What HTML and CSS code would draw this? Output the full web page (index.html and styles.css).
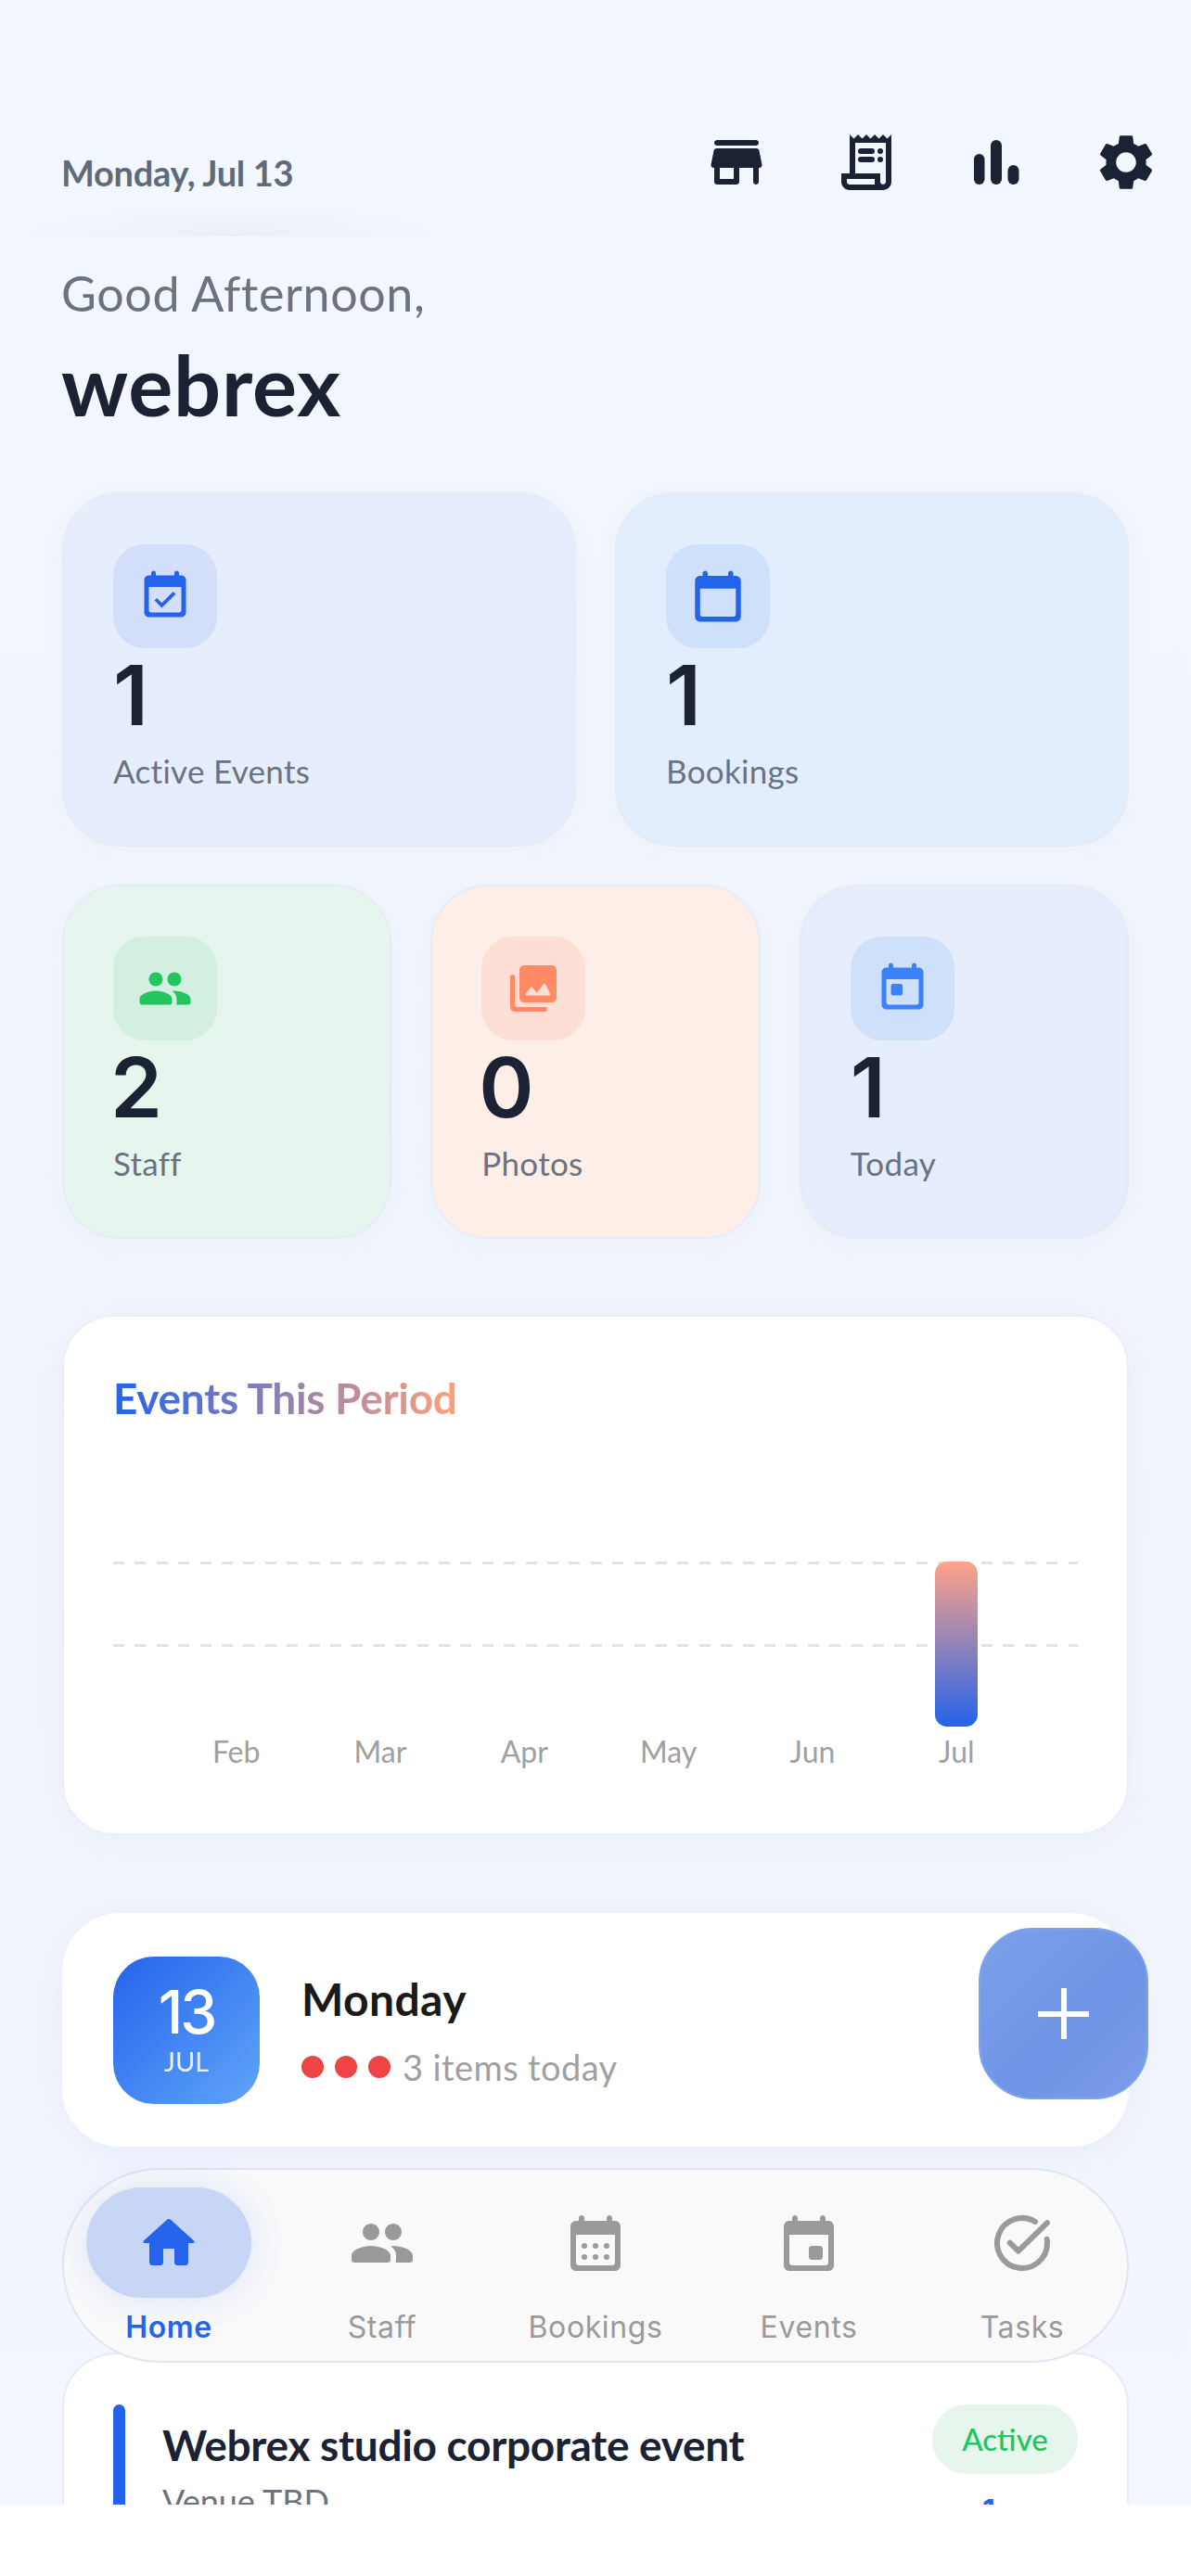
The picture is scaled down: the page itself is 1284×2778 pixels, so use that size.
FILE: index.html
```html
<!DOCTYPE html>
<html lang="en">
<head>
  <meta charset="UTF-8" />
  <meta name="viewport" content="width=device-width, initial-scale=1.0" />
  <title>Dashboard</title>
  <link rel="stylesheet" href="styles.css">
</head>

<body>
  <div class="screen">
    <div class="top-smear"></div>

    <header class="topbar">
      <div class="today-date">Monday, Jul 13</div>
      <div class="top-icons">
        <svg class="top-icon" viewBox="0 0 24 24"><path d="M5 6h14c.55 0 1-.45 1-1s-.45-1-1-1H5c-.55 0-1 .45-1 1s.45 1 1 1zm15.16 1.8c-.09-.46-.5-.8-.98-.8H4.82c-.48 0-.89.34-.98.8l-1 5c-.12.62.35 1.2.98 1.2H4v5c0 .55.45 1 1 1h7c.55 0 1-.45 1-1v-5h5v5c0 .55.45 1 1 1s1-.45 1-1v-5h.18c.63 0 1.1-.58.98-1.2l-1-5zM11 18H6v-4h5v4z"/></svg>
        <svg class="top-icon" viewBox="0 0 24 24"><path d="M19.5 3.5 18 2l-1.5 1.5L15 2l-1.5 1.5L12 2l-1.5 1.5L9 2 7.5 3.5 6 2v14H3v3c0 1.66 1.34 3 3 3h12c1.66 0 3-1.34 3-3V2l-1.5 1.5zM15 20H6c-.55 0-1-.45-1-1v-1h10v2zm4-1c0 .55-.45 1-1 1s-1-.45-1-1v-3H8V5h11v14z"/><rect x="9" y="7" width="6" height="2" rx="1"/><circle cx="17" cy="8" r="1"/><rect x="9" y="10" width="6" height="2" rx="1"/><circle cx="17" cy="11" r="1"/></svg>
        <svg class="top-icon" viewBox="0 0 72 72"><rect x="12" y="27" width="11.5" height="33" rx="5.7"/><rect x="30" y="12" width="12" height="48" rx="6"/><rect x="48.5" y="39" width="12" height="21" rx="6"/></svg>
        <svg class="top-icon" viewBox="0 0 24 24"><path d="M19.14 12.94c.04-.3.06-.61.06-.94 0-.32-.02-.64-.07-.94l2.03-1.58c.18-.14.23-.41.12-.61l-1.92-3.32c-.12-.22-.37-.29-.59-.22l-2.39.96c-.5-.38-1.03-.7-1.62-.94l-.36-2.54c-.04-.24-.24-.41-.48-.41h-3.84c-.24 0-.43.17-.47.41l-.36 2.54c-.59.24-1.13.57-1.62.94l-2.39-.96c-.22-.08-.47 0-.59.22L2.74 8.87c-.12.21-.08.47.12.61l2.03 1.58c-.05.3-.09.63-.09.94s.02.64.07.94l-2.03 1.58c-.18.14-.23.41-.12.61l1.92 3.32c.12.22.37.29.59.22l2.39-.96c.5.38 1.03.7 1.62.94l.36 2.54c.05.24.24.41.48.41h3.84c.24 0 .44-.17.47-.41l.36-2.54c.59-.24 1.13-.56 1.62-.94l2.39.96c.22.08.47 0 .59-.22l1.92-3.32c.12-.22.07-.47-.12-.61l-2.01-1.58zM12 15.6c-1.98 0-3.6-1.62-3.6-3.6s1.62-3.6 3.6-3.6 3.6 1.62 3.6 3.6-1.62 3.6-3.6 3.6z"/></svg>
      </div>
    </header>

    <main class="content">
      <div class="greeting">Good Afternoon,</div>
      <h1 class="user-name">webrex</h1>

      <section class="stat-row stat-row-two">
        <div class="stat-card tint-indigo">
          <div class="stat-icon box-indigo">
            <svg class="icon-60 ink-blue" viewBox="0 0 24 24"><path d="M19 3h-1V2c0-.55-.45-1-1-1s-1 .45-1 1v1H8V2c0-.55-.45-1-1-1s-1 .45-1 1v1H5c-1.11 0-1.99.9-1.99 2L3 19c0 1.1.89 2 2 2h14c1.1 0 2-.9 2-2V5c0-1.1-.9-2-2-2zm-1 16H6c-.55 0-1-.45-1-1V8h14v10c0 .55-.45 1-1 1z"/><path d="M16.53 11.06 15.47 10l-4.88 4.88-2.12-2.12-1.06 1.06L10.59 17l5.94-5.94z"/></svg>
          </div>
          <div class="stat-number digit-one">1</div>
          <div class="stat-label">Active Events</div>
        </div>
        <div class="stat-card tint-sky">
          <div class="stat-icon box-sky">
            <svg class="icon-66 ink-blue" viewBox="0 0 24 24"><path d="M19 4h-1V3c0-.55-.45-1-1-1s-1 .45-1 1v1H8V3c0-.55-.45-1-1-1s-1 .45-1 1v1H5c-1.11 0-1.99.9-1.99 2L3 20c0 1.1.89 2 2 2h14c1.1 0 2-.9 2-2V6c0-1.1-.9-2-2-2zm-1 16H6c-.55 0-1-.45-1-1V9h14v10c0 .55-.45 1-1 1z"/></svg>
          </div>
          <div class="stat-number digit-one">1</div>
          <div class="stat-label">Bookings</div>
        </div>
      </section>

      <section class="stat-row stat-row-three">
        <div class="stat-card tint-green">
          <div class="stat-icon box-green">
            <svg class="icon-60 ink-green" viewBox="0 0 24 24"><path d="M16 11c1.66 0 2.99-1.34 2.99-3S17.66 5 16 5c-1.66 0-3 1.34-3 3s1.34 3 3 3zm-8 0c1.66 0 2.99-1.34 2.99-3S9.66 5 8 5C6.34 5 5 6.34 5 8s1.34 3 3 3zm0 2c-2.33 0-7 1.17-7 3.5V18c0 .55.45 1 1 1h12c.55 0 1-.45 1-1v-1.5c0-2.33-4.67-3.5-7-3.5zm8 0c-.29 0-.62.02-.97.05.02.01.03.03.04.04 1.14.83 1.93 1.94 1.93 3.41V18c0 .35-.07.69-.18 1H22c.55 0 1-.45 1-1v-1.5c0-2.33-4.67-3.5-7-3.5z"/></svg>
          </div>
          <div class="stat-number">2</div>
          <div class="stat-label">Staff</div>
        </div>
        <div class="stat-card tint-peach">
          <div class="stat-icon box-peach">
            <svg class="icon-60 ink-orange" viewBox="0 0 24 24"><path d="M20 2H8c-1.1 0-2 .9-2 2v12c0 1.1.9 2 2 2h12c1.1 0 2-.9 2-2V4c0-1.1-.9-2-2-2zm-1.2 13H9.2c-.41 0-.65-.47-.4-.8l2-2.67c.2-.27.6-.27.8 0L13.5 14l2.9-3.87c.2-.27.6-.27.8 0l2 4.07c.25.33.01.8-.4.8z"/><path d="M3 6c-.55 0-1 .45-1 1v13c0 1.1.9 2 2 2h13c.55 0 1-.45 1-1s-.45-1-1-1H5c-.55 0-1-.45-1-1V7c0-.55-.45-1-1-1z"/></svg>
          </div>
          <div class="stat-number">0</div>
          <div class="stat-label">Photos</div>
        </div>
        <div class="stat-card tint-indigo">
          <div class="stat-icon box-sky">
            <svg class="icon-60 ink-sky" viewBox="0 0 24 24"><path d="M19 3h-1V2c0-.55-.45-1-1-1s-1 .45-1 1v1H8V2c0-.55-.45-1-1-1s-1 .45-1 1v1H5c-1.11 0-1.99.9-1.99 2L3 19c0 1.1.89 2 2 2h14c1.1 0 2-.9 2-2V5c0-1.1-.9-2-2-2zm-1 16H6c-.55 0-1-.45-1-1V8h14v10c0 .55-.45 1-1 1z"/><rect x="7" y="10" width="5" height="5" rx="1"/></svg>
          </div>
          <div class="stat-number digit-one">1</div>
          <div class="stat-label">Today</div>
        </div>
      </section>

      <section class="chart-card">
        <h2 class="chart-title">Events This Period</h2>
        <div class="chart">
          <div class="chart-lines"></div>
          <div class="chart-col"><div class="bar-slot"></div><span class="chart-month">Feb</span></div>
          <div class="chart-col"><div class="bar-slot"></div><span class="chart-month">Mar</span></div>
          <div class="chart-col"><div class="bar-slot"></div><span class="chart-month">Apr</span></div>
          <div class="chart-col"><div class="bar-slot"></div><span class="chart-month">May</span></div>
          <div class="chart-col"><div class="bar-slot"></div><span class="chart-month">Jun</span></div>
          <div class="chart-col"><div class="bar-slot"><div class="bar" style="height: 100%"></div></div><span class="chart-month">Jul</span></div>
        </div>
      </section>

      <section class="day-card">
        <div class="day-badge">
          <span class="day-num">13</span>
          <span class="day-month">JUL</span>
        </div>
        <div class="day-info">
          <div class="day-name">Monday</div>
          <div class="day-items">
            <span class="dot"></span><span class="dot"></span><span class="dot"></span>
            <span class="day-count">3 items today</span>
          </div>
        </div>
      </section>

      <section class="event-card">
        <div class="event-stripe"></div>
        <div class="event-main">
          <div class="event-title">Webrex studio corporate event</div>
          <div class="event-venue">Venue TBD</div>
        </div>
        <div class="event-side">
          <span class="status-pill">Active</span>
          <span class="event-count">1</span>
        </div>
      </section>
    </main>

    <button class="fab" aria-label="Add"><span class="fab-plus"></span></button>

    <nav class="bottom-nav">
      <a class="nav-item active">
        <span class="nav-icon">
          <svg viewBox="0 0 24 24"><path d="M10 19v-5h4v5c0 .55.45 1 1 1h3c.55 0 1-.45 1-1v-7h1.7c.46 0 .68-.57.33-.87L12.67 3.6c-.38-.34-.96-.34-1.34 0l-8.36 7.53c-.34.3-.13.87.33.87H5v7c0 .55.45 1 1 1h3c.55 0 1-.45 1-1z"/></svg>
        </span>
        <span class="nav-label">Home</span>
      </a>
      <a class="nav-item">
        <span class="nav-icon">
          <svg viewBox="0 0 24 24"><path d="M16 11c1.66 0 2.99-1.34 2.99-3S17.66 5 16 5c-1.66 0-3 1.34-3 3s1.34 3 3 3zm-8 0c1.66 0 2.99-1.34 2.99-3S9.66 5 8 5C6.34 5 5 6.34 5 8s1.34 3 3 3zm0 2c-2.33 0-7 1.17-7 3.5V18c0 .55.45 1 1 1h12c.55 0 1-.45 1-1v-1.5c0-2.33-4.67-3.5-7-3.5zm8 0c-.29 0-.62.02-.97.05.02.01.03.03.04.04 1.14.83 1.93 1.94 1.93 3.41V18c0 .35-.07.69-.18 1H22c.55 0 1-.45 1-1v-1.5c0-2.33-4.67-3.5-7-3.5z"/></svg>
        </span>
        <span class="nav-label">Staff</span>
      </a>
      <a class="nav-item">
        <span class="nav-icon">
          <svg viewBox="0 0 24 24"><path d="M19 4h-1V3c0-.55-.45-1-1-1s-1 .45-1 1v1H8V3c0-.55-.45-1-1-1s-1 .45-1 1v1H5c-1.11 0-1.99.9-1.99 2L3 20c0 1.1.89 2 2 2h14c1.1 0 2-.9 2-2V6c0-1.1-.9-2-2-2zm-1 16H6c-.55 0-1-.45-1-1V9h14v10c0 .55-.45 1-1 1z"/><circle cx="8" cy="13" r="1"/><circle cx="12" cy="13" r="1"/><circle cx="16" cy="13" r="1"/><circle cx="8" cy="17" r="1"/><circle cx="12" cy="17" r="1"/><circle cx="16" cy="17" r="1"/></svg>
        </span>
        <span class="nav-label">Bookings</span>
      </a>
      <a class="nav-item">
        <span class="nav-icon">
          <svg viewBox="0 0 24 24"><path d="M16 13h-3c-.55 0-1 .45-1 1v3c0 .55.45 1 1 1h3c.55 0 1-.45 1-1v-3c0-.55-.45-1-1-1zm0-10v1H8V3c0-.55-.45-1-1-1s-1 .45-1 1v1H5c-1.11 0-1.99.9-1.99 2L3 20c0 1.1.89 2 2 2h14c1.1 0 2-.9 2-2V6c0-1.1-.9-2-2-2h-1V3c0-.55-.45-1-1-1s-1 .45-1 1zm2 17H6c-.55 0-1-.45-1-1V9h14v10c0 .55-.45 1-1 1z"/></svg>
        </span>
        <span class="nav-label">Events</span>
      </a>
      <a class="nav-item">
        <span class="nav-icon">
          <svg class="stroke-icon" viewBox="0 0 24 24"><path d="M20.9 10.6c.07.46.1.92.1 1.4a9 9 0 1 1-4.3-7.68"/><path d="M7.6 11.9l3 3L21 4.7"/></svg>
        </span>
        <span class="nav-label">Tasks</span>
      </a>
    </nav>
  </div>
</body>
</html>
```

FILE: styles.css
```css
* {
  box-sizing: border-box;
}
body {
  margin: 0;
  background-color: #ffffff;
  font-family: "Lato", "Open Sans", sans-serif;
  color: #1a2233;
}
.screen {
  position: relative;
  width: 1284px;
  height: 2701px;
  overflow: hidden;
  background: linear-gradient(180deg, #f3f7ff 0%, #f0f4fc 60%, #f2f6fe 100%);
}
.top-smear {
  position: absolute;
  left: 0;
  top: 217px;
  width: 500px;
  height: 38px;
  background: radial-gradient(ellipse at 50% 100%, rgba(226, 229, 238, 0.45), rgba(226, 229, 238, 0) 70%);
}

/* top row */
.topbar {
  position: relative;
  display: flex;
  justify-content: space-between;
  padding: 139px 34px 0 66px;
}
.today-date {
  margin-top: 23px;
  font-size: 38px;
  line-height: 48px;
  font-weight: 700;
  letter-spacing: -0.3px;
  color: #5f6b7a;
}
.top-icons {
  display: flex;
  gap: 68px;
}
.top-icon {
  width: 72px;
  height: 72px;
  fill: #1a2233;
}

/* main column */
.content {
  position: relative;
  padding: 73px 67px 0;
}
.greeting {
  margin-left: -1px;
  padding-top: 1px;
  font-size: 52px;
  line-height: 62px;
  letter-spacing: 0.6px;
  color: #6b7280;
}
.user-name {
  margin: 17px 0 0 -1px;
  font-size: 90px;
  line-height: 100px;
  font-weight: 700;
  letter-spacing: 0.8px;
  color: #1a2233;
}

/* stat cards */
.stat-row {
  display: grid;
  gap: 42px;
}
.stat-row-two {
  grid-template-columns: repeat(2, 1fr);
  margin-top: 67px;
}
.stat-row-three {
  grid-template-columns: repeat(3, 1fr);
  margin-top: 41px;
}
.stat-card {
  height: 382px;
  padding: 54px 53px;
  border: 2px solid #e7ebf4;
  border-radius: 62px;
  box-shadow: 0 6px 30px rgba(60, 90, 160, 0.03);
}
.tint-indigo { background-color: #e6edfc; }
.tint-sky { background-color: #e2eefd; }
.tint-green { background-color: #e6f6ee; }
.tint-peach { background-color: #feeee8; }

.stat-icon {
  display: flex;
  align-items: center;
  justify-content: center;
  width: 112px;
  height: 112px;
  border-radius: 34px;
}
.box-indigo { background-color: #d3dffa; }
.box-sky { background-color: #cfe0fb; }
.box-green { background-color: #d3efdf; }
.box-peach { background-color: #fedfd5; }

.icon-60 { width: 60px; height: 60px; }
.icon-66 { width: 66px; height: 66px; }
.ink-blue { fill: #2563eb; }
.ink-sky { fill: #3b82f6; }
.ink-green { fill: #22c55e; }
.ink-orange { fill: #ff8a65; }

.stat-number {
  margin: 6px 0 0 -3px;
  font-family: "Inter", sans-serif;
  font-size: 90px;
  line-height: 90px;
  font-weight: 600;
  color: #1a2233;
}
.stat-number.digit-one {
  margin-left: 0;
}
.stat-label {
  margin-top: 14px;
  font-size: 35px;
  line-height: 44px;
  letter-spacing: 0.3px;
  color: #6b7280;
}

/* chart */
.chart-card {
  margin-top: 82px;
  height: 561px;
  padding: 61px 53px 0;
  background-color: #ffffff;
  border: 2px solid #e9eef8;
  border-radius: 56px;
  box-shadow: 0 8px 36px rgba(60, 90, 160, 0.04);
}
.chart-title {
  margin: 0;
  display: inline-block;
  padding-bottom: 4px;
  font-size: 46px;
  line-height: 54px;
  font-weight: 700;
  letter-spacing: -0.3px;
  background: linear-gradient(90deg, #2563eb, #ffa07a);
  -webkit-background-clip: text;
  background-clip: text;
  color: transparent;
}
.chart {
  position: relative;
  display: grid;
  grid-template-columns: repeat(6, 1fr);
  margin-top: 145px;
  padding: 0 53px 0 55px;
}
.chart-lines {
  position: absolute;
  left: 0;
  right: 0;
  top: 0;
  height: 92px;
  background-image:
    repeating-linear-gradient(90deg, #e2e2e2 0, #e2e2e2 12px, transparent 12px, transparent 23.4px),
    repeating-linear-gradient(90deg, #e2e2e2 0, #e2e2e2 12px, transparent 12px, transparent 23.4px);
  background-size: 100% 3px, 100% 3px;
  background-position: 0 0, 0 89px;
  background-repeat: no-repeat;
}
.chart-col {
  position: relative;
  display: flex;
  flex-direction: column;
  align-items: center;
}
.bar-slot {
  display: flex;
  align-items: flex-end;
  height: 178px;
}
.bar {
  width: 46px;
  border-radius: 13px;
  background: linear-gradient(180deg, #ffa387, #2563eb);
}
.chart-month {
  margin-top: 8px;
  font-size: 32px;
  line-height: 38px;
  color: #a0a0a0;
}

/* day card */
.day-card {
  display: flex;
  align-items: center;
  gap: 45px;
  margin-top: 84px;
  height: 252px;
  padding: 0 55px;
  background-color: #ffffff;
  border-radius: 62px;
  box-shadow: 0 8px 40px rgba(60, 90, 160, 0.06);
}
.day-badge {
  display: flex;
  flex-direction: column;
  align-items: center;
  width: 158px;
  height: 159px;
  padding-top: 28px;
  border-radius: 44px;
  background: linear-gradient(135deg, #2563eb, #60a5fa);
  color: #ffffff;
}
.day-num {
  font-family: "Inter", sans-serif;
  font-size: 64px;
  line-height: 64px;
  font-weight: 500;
  letter-spacing: -3px;
}
.day-month {
  margin-top: 5px;
  font-size: 29px;
  line-height: 32px;
  opacity: 0.9;
}
.day-name {
  font-size: 48px;
  line-height: 56px;
  font-weight: 700;
  letter-spacing: 0.4px;
  color: #1a1a1a;
}
.day-items {
  display: flex;
  align-items: center;
  margin-top: 23px;
}
.dot {
  width: 24px;
  height: 24px;
  margin-right: 12px;
  border-radius: 50%;
  background-color: #ef4444;
}
.day-count {
  margin-left: 1px;
  font-size: 38px;
  line-height: 44px;
  letter-spacing: 0.4px;
  color: #a0a0a0;
}

/* event card, runs under the nav and off the screen */
.event-card {
  display: flex;
  align-items: flex-start;
  margin-top: 222px;
  height: 300px;
  padding: 54px 53px 0;
  background-color: #ffffff;
  border: 2px solid #e6ebf6;
  border-radius: 58px;
}
.event-stripe {
  flex: none;
  width: 13px;
  height: 220px;
  border-radius: 7px;
  background-color: #2563eb;
}
.event-main {
  flex: 1;
  margin-left: 40px;
  padding-top: 17px;
}
.event-title {
  font-size: 46px;
  line-height: 54px;
  font-weight: 700;
  letter-spacing: -0.3px;
  color: #1a2233;
}
.event-venue {
  margin-top: 11px;
  font-size: 36px;
  line-height: 44px;
  color: #6b7280;
}
.event-side {
  display: flex;
  flex-direction: column;
  align-items: flex-start;
  width: 157px;
}
.status-pill {
  display: block;
  width: 157px;
  height: 75px;
  border-radius: 38px;
  background-color: #e6f6ec;
  color: #22c55e;
  font-size: 33px;
  line-height: 75px;
  font-weight: 500;
  text-align: center;
}
.event-count {
  margin: 20px 0 0 54px;
  font-family: "Inter", sans-serif;
  font-size: 32px;
  line-height: 40px;
  font-weight: 700;
  color: #2563eb;
}

/* floating add button */
.fab {
  position: absolute;
  left: 1055px;
  top: 2079px;
  width: 183px;
  height: 185px;
  padding: 0;
  border: 2px solid #7ea3ee;
  border-radius: 58px;
  background: linear-gradient(135deg, #7aa0ea, #7094e6 60%, #7c9ce8);
}
.fab-plus {
  position: absolute;
  left: 62px;
  top: 63px;
  width: 55px;
  height: 55px;
  background:
    linear-gradient(#ffffff, #ffffff) center / 55px 6px no-repeat,
    linear-gradient(#ffffff, #ffffff) center / 6px 55px no-repeat;
  border-radius: 3px;
}

/* bottom nav */
.bottom-nav {
  position: absolute;
  left: 67px;
  top: 2338px;
  display: flex;
  width: 1150px;
  height: 210px;
  padding-top: 21px;
  background-color: rgba(249, 249, 250, 0.98);
  box-shadow: inset 0 0 0 2px #dfe5f3;
  border-radius: 105px;
}
.nav-item {
  display: flex;
  flex: 1;
  flex-direction: column;
  align-items: center;
  color: #9a9a9a;
}
.nav-icon {
  display: flex;
  align-items: center;
  justify-content: center;
  width: 178px;
  height: 119px;
  border-radius: 60px;
}
.nav-icon svg {
  width: 72px;
  height: 72px;
  fill: currentColor;
}
.nav-icon .stroke-icon {
  fill: none;
  stroke: currentColor;
  stroke-width: 2;
  stroke-linecap: round;
  stroke-linejoin: round;
}
.nav-label {
  margin-top: 12px;
  font-family: "Inter", sans-serif;
  font-size: 32px;
  line-height: 40px;
  letter-spacing: 0.6px;
}
.nav-item.active {
  color: #2563eb;
}
.nav-item.active .nav-icon {
  background-color: #c8d6f5;
  box-shadow: 0 0 40px rgba(37, 99, 235, 0.14);
}
.nav-item.active .nav-label {
  font-weight: 600;
}
```
